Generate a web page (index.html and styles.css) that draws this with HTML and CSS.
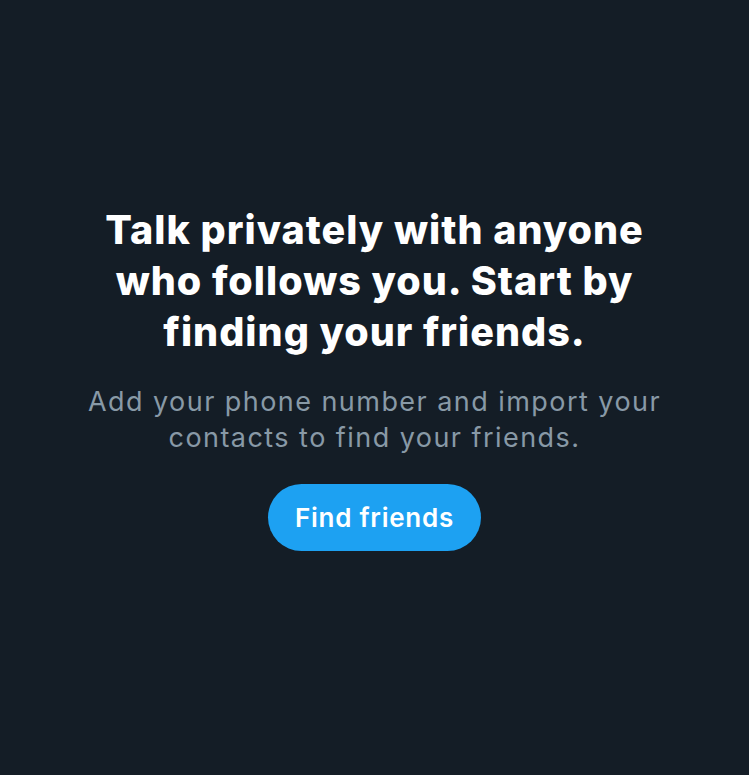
FILE: index.html
```html
<!DOCTYPE html>
<html>
<head>
<meta charset="utf-8">
<link rel="stylesheet" href="styles.css">
</head>
<body>
<main class="page">
  <section class="empty">
    <h1 class="title">Talk privately with anyone who follows you. Start by finding your friends.</h1>
    <p class="sub">Add your phone number and import your contacts to find your friends.</p>
    <button class="btn">Find friends</button>
  </section>
</main>
</body>
</html>
```
FILE: styles.css
```css
html, body {
  margin: 0;
  padding: 0;
  background: #141d26;
}
.page {
  width: 749px;
  height: 775px;
  display: flex;
  align-items: center;
  justify-content: center;
  font-family: Inter, "Noto Sans", sans-serif;
}
.empty {
  width: 610px;
  display: flex;
  flex-direction: column;
  align-items: center;
  text-align: center;
  margin-top: -20px;
}
.title {
  margin: 0;
  max-width: 565px;
  color: #ffffff;
  font-size: 39.5px;
  font-weight: 800;
  line-height: 51px;
  letter-spacing: 1px;
}
.sub {
  margin: 26px 0 0;
  color: #8899a6;
  font-size: 27px;
  font-weight: 400;
  line-height: 36px;
  letter-spacing: 1.45px;
}
.btn {
  margin-top: 28px;
  width: 213px;
  height: 67px;
  border: none;
  border-radius: 34px;
  background: #1da1f2;
  color: #ffffff;
  font-family: Inter, "Noto Sans", sans-serif;
  font-size: 26px;
  font-weight: 600;
  letter-spacing: 0.75px;
}
```
